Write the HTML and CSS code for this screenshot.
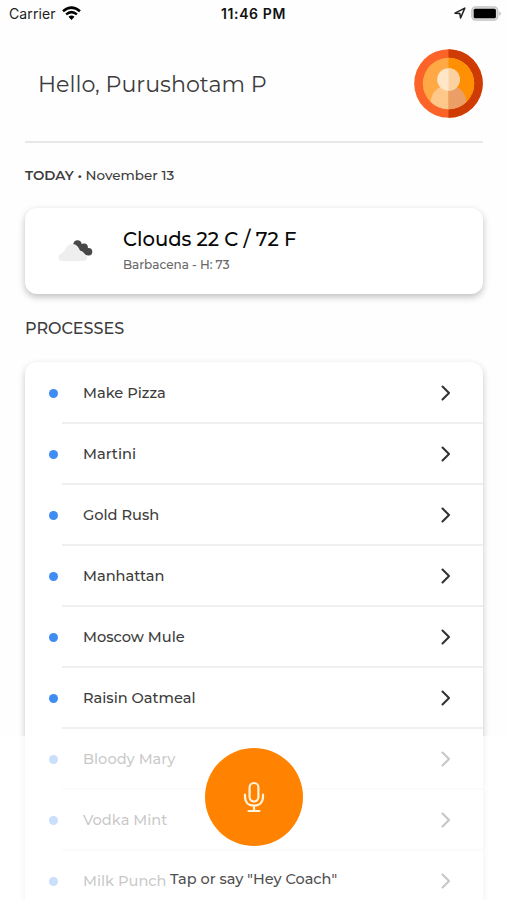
FILE: index.html
```html
<!DOCTYPE html>
<html lang="en">
<head>
<meta charset="utf-8">
<meta name="viewport" content="width=device-width, initial-scale=1">
<title>Coach</title>
<link rel="stylesheet" href="styles.css">
</head>
<body>
<div class="screen">
  <header class="status">
    <div class="status-left"><span class="carrier">Carrier</span>
      <svg class="wifi" width="19" height="15" viewBox="0 0 19 15"><g fill="none" stroke="#000" stroke-width="2.5"><path d="M1 5.2Q9.5-2 18 5.2"/><path d="M4.1 8.4Q9.5 3.8 14.9 8.4"/></g><path d="M6.5 10.8Q9.5 8.4 12.5 10.8L9.5 14Z"/></svg>
    </div>
    <span class="clock">11:46 PM</span>
    <div class="status-right">
      <svg width="12" height="12" viewBox="0 0 12 12"><path d="M1 6.2L10.8 1.1L6.6 11L5.8 6.4Z" fill="none" stroke="#222" stroke-width="1.500" stroke-linejoin="round"/></svg>
      <svg width="31" height="15" viewBox="0 0 31 15"><rect x=".8" y=".8" width="26" height="13.4" rx="4" fill="#ddd" stroke="#c4c4c4" stroke-width="1.3"/><rect x="2.700" y="2.800" width="22.200" height="9.400" rx="1.500"/><path d="M28.400 5.2Q31 7.5 28.400 9.8Z" fill="#aaa"/></svg>
    </div>
  </header>
  <main>
    <section class="hello">
      <h1>Hello, Purushotam P</h1>
      <svg class="avatar" width="69" height="69" viewBox="0 0 69 69">
        <circle cx="34.5" cy="34.5" r="34.3" fill="#fb6328"/><path d="M34.5.2a34.3 34.3 0 0 1 0 68.6Z" fill="#ce3b05"/>
        <circle cx="34.5" cy="34.5" r="25.7" fill="#ffa944"/><path d="M34.5 8.8a25.7 25.7 0 0 1 0 51.4Z" fill="#ff9004"/>
        <path d="M34.5 36.500C24 36.500 17 43.500 16.800 53Q24 60.2 34.5 60.2Z" fill="#fdc88a"/><path d="M34.5 36.500C45 36.500 52 43.500 52.200 53Q45 60.2 34.500 60.2Z" fill="#eb9e66"/>
        <circle cx="34.5" cy="30.500" r="11.300" fill="#ffe6c6"/><path d="M34.500 19.200a11.300 11.300 0 0 1 0 22.600Z" fill="#fcd1a2"/>
      </svg>
    </section>
    <p class="date"><b>TODAY •</b> <span>November 13</span></p>
    <section class="weather">
      <svg class="cloud" width="36" height="24" viewBox="0 0 36 24"><g fill="#484848"><circle cx="19.500" cy="5.500" r="4.300"/><circle cx="26" cy="8.500" r="3.900"/><circle cx="30.500" cy="12.800" r="3.800"/><path d="M17 9L28 16H31L25 8Z"/></g><path d="M4 22a3.800 3.800 0 0 1-.5-7.500C5 13.500 6 12.500 7 10.500C8.500 7 11 5 14.500 5c4 0 6 3 7.500 6.500 3 .5 4 2.500 5.500 4.500 3.500 2 1 6-2 6Z" fill="#eee"/></svg>
      <div><h2>Clouds 22 C / 72 F</h2><p class="place">Barbacena - H: 73</p></div>
    </section>
    <h3>PROCESSES</h3>
    <ul class="list">
      <li><i></i><div><span>Make Pizza</span><svg viewBox="0 0 10 16"><path d="M1.500 1.500L8 8L1.500 14.500"/></svg></div></li>
      <li><i></i><div><span>Martini</span><svg viewBox="0 0 10 16"><path d="M1.500 1.500L8 8L1.500 14.500"/></svg></div></li>
      <li><i></i><div><span>Gold Rush</span><svg viewBox="0 0 10 16"><path d="M1.500 1.500L8 8L1.500 14.500"/></svg></div></li>
      <li><i></i><div><span>Manhattan</span><svg viewBox="0 0 10 16"><path d="M1.500 1.500L8 8L1.500 14.500"/></svg></div></li>
      <li><i></i><div><span>Moscow Mule</span><svg viewBox="0 0 10 16"><path d="M1.500 1.500L8 8L1.500 14.500"/></svg></div></li>
      <li><i></i><div><span>Raisin Oatmeal</span><svg viewBox="0 0 10 16"><path d="M1.500 1.500L8 8L1.500 14.500"/></svg></div></li>
      <li><i></i><div><span>Bloody Mary</span><svg viewBox="0 0 10 16"><path d="M1.500 1.500L8 8L1.500 14.500"/></svg></div></li>
      <li><i></i><div><span>Vodka Mint</span><svg viewBox="0 0 10 16"><path d="M1.500 1.500L8 8L1.500 14.500"/></svg></div></li>
      <li><i></i><div><span>Milk Punch</span><svg viewBox="0 0 10 16"><path d="M1.500 1.500L8 8L1.500 14.500"/></svg></div></li>
    </ul>
  </main>
  <footer class="voice">
    <button class="mic" aria-label="Speak"><svg width="22" height="32" viewBox="0 0 22 32" fill="none" stroke="#fff3dc" stroke-width="2.200" stroke-linecap="round"><rect x="6.600" y="2" width="8.800" height="18.500" rx="4.400"/><path d="M2 13.500V15.500C2 21.500 6 24.700 11 24.700S20 21.500 20 15.500V13.500M11 24.700V30M5.500 30H16.500"/></svg></button>
    <p>Tap or say "Hey Coach"</p>
  </footer>
</div>
</body>
</html>
```
FILE: styles.css
```css
* { box-sizing: border-box; }
body { margin: 0; background: #fefefe; font-family: Montserrat, Inter, sans-serif; color: #3c3c3c; }
h1, h2, h3, p, ul { margin: 0; padding: 0; }
.screen { position: relative; width: 507px; height: 900px; overflow: hidden; }
.status { display: grid; grid-template-columns: 1fr auto 1fr; align-items: center; height: 28px; padding: 0 5px 0 9px; font: 14px/28px Inter, sans-serif; color: #222; }
.carrier { letter-spacing: .1px; }
.status-left, .status-right { display: flex; align-items: center; gap: 5px; }
.status-left { gap: 6px; }
.status-right { justify-content: flex-end; margin-top: -2px; }
.wifi { margin-bottom: 2px; }
.clock { font-weight: 600; font-size: 14px; letter-spacing: .6px; color: #111; margin-right: 4px; }
main { padding: 0 24px 0 25px; }
.hello { display: flex; align-items: center; justify-content: space-between; height: 115px; padding: 0 0 2px 13px; border-bottom: 2px solid #e8e8e8; }
h1 { font-size: 22.200px; font-weight: 450; line-height: 30px; white-space: nowrap; padding-top: 3px; }
.avatar { flex: none; }
.date { height: 65px; padding-top: 22px; font-size: 13.500px; line-height: 20px; white-space: nowrap; font-weight: 500; }
.date b { font-weight: 600; }
.weather { display: flex; align-items: center; height: 86px; padding-bottom: 2px; border-radius: 12px; background: #fff; box-shadow: 0 3px 7px rgba(0,0,0,.25); }
.cloud { margin: 2px 29px 0 33px; }
h2 { color: #080808; font-size: 19.600px; line-height: 28px; font-weight: 500; white-space: nowrap; }
.place { font-size: 12px; line-height: 23px; font-weight: 500; color: #686868; }
h3 { height: 68px; padding-top: 25px; font-size: 16px; line-height: 20px; font-weight: 550; }
.list { list-style: none; border-radius: 12px; background: #fff; box-shadow: 0 3px 7px rgba(0,0,0,.22); height: 650px; padding-top: 1px; }
li { display: flex; align-items: center; height: 61px; padding-left: 24px; }
i { flex: none; width: 9px; height: 9px; margin-bottom: 1px; border-radius: 50%; background: #3f8cf3; }
li div { display: flex; align-items: center; justify-content: space-between; flex: 1; height: 100%; margin-left: 4px; padding: 1px 32px 0 21px; border-bottom: 2px solid #efefef; font-size: 14.600px; font-weight: 500; }
li svg { width: 10px; height: 16px; fill: none; stroke: #333; stroke-width: 2.100; stroke-linecap: round; stroke-linejoin: round; }
.voice { position: absolute; left: 0; right: 0; top: 736px; height: 164px; padding-top: 12px; background: rgba(255,255,255,.72); display: flex; flex-direction: column; align-items: center; }
.mic { display: flex; align-items: center; justify-content: center; width: 98px; height: 98px; padding: 0; border: 0; border-radius: 50%; background: #ff8200; }
.voice p { margin-top: 23px; font-size: 14.500px; font-weight: 500; line-height: 20px; color: #505050; }
```
